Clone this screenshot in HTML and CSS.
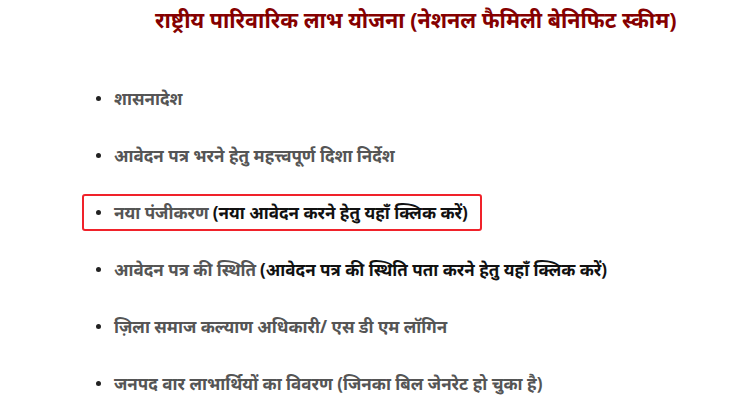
FILE: index.html
```html
<!DOCTYPE html>
<html lang="hi">
<head>
<meta charset="utf-8">
<link rel="stylesheet" href="styles.css">
</head>
<body>
<div class="page">
  <h1 class="title">राष्ट्रीय पारिवारिक लाभ योजना (नेशनल फैमिली बेनिफिट स्कीम)</h1>
  <ul class="links">
    <li class="item"><span class="lbl">शासनादेश</span></li>
    <li class="item"><span class="lbl">आवेदन पत्र भरने हेतु महत्त्वपूर्ण दिशा निर्देश</span></li>
    <li class="item boxed"><span class="lbl">नया पंजीकरण</span> <span class="hint">(नया आवेदन करने हेतु यहाँ क्लिक करें)</span></li>
    <li class="item"><span class="lbl">आवेदन पत्र की स्थिति</span> <span class="hint">(आवेदन पत्र की स्थिति पता करने हेतु यहाँ क्लिक करें)</span></li>
    <li class="item"><span class="lbl">ज़िला समाज कल्याण अधिकारी/ एस डी एम लॉगिन</span></li>
    <li class="item"><span class="lbl">जनपद वार लाभार्थियों का विवरण (जिनका बिल जेनरेट हो चुका है)</span></li>
  </ul>
</div>
</body>
</html>
```
FILE: styles.css
```css
html, body {
  margin: 0;
  padding: 0;
  background: #ffffff;
}
body {
  font-family: "Noto Sans", "Liberation Sans", sans-serif;
}
.page {
  width: 744px;
  height: 417px;
  overflow: hidden;
}
.title {
  margin: 0;
  padding: 5px 0 0 155px;
  font-size: 21.5px;
  font-weight: bold;
  color: #850000;
  line-height: 30px;
}
.links {
  list-style: none;
  margin: 45px 0 0 0;
  padding: 0 0 0 82px;
  display: flex;
  flex-direction: column;
  gap: 20px;
}
.item {
  display: flex;
  align-items: center;
  gap: 4px;
  height: 37px;
  padding-left: 12px;
  padding-right: 12px;
  font-size: 17px;
  font-weight: bold;
  color: #555555;
  width: max-content;
  box-sizing: border-box;
  border: 2px solid transparent;
}
.item::before {
  content: "";
  width: 5px;
  height: 5px;
  border-radius: 50%;
  background: #222;
  margin-right: 9px;
}
.boxed {
  border-color: #f0222a;
  border-radius: 3px;
}
.hint {
  color: #111111;
}
```
